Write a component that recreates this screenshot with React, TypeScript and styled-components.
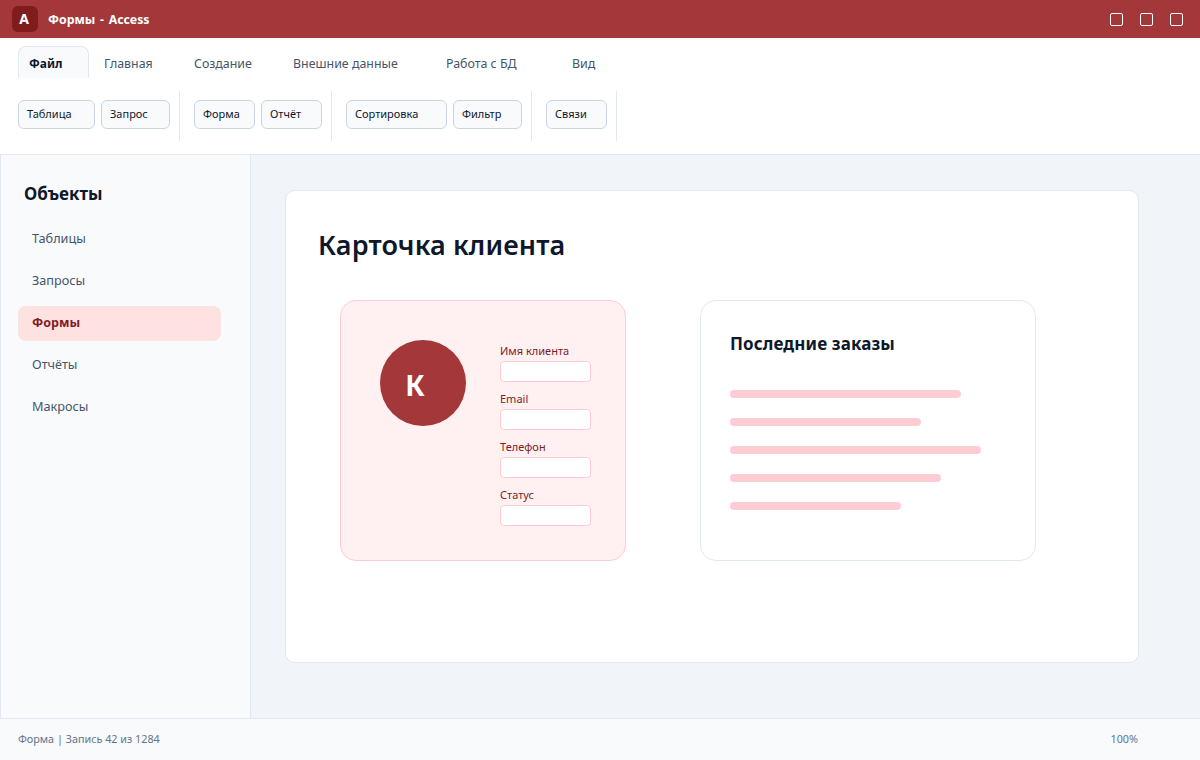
import React from "react";
import styled, { createGlobalStyle } from "styled-components";

const GlobalStyle = createGlobalStyle`
  html, body {
    margin: 0;
    padding: 0;
    height: 100%;
    overflow: hidden;
  }
  body {
    font-family: "Noto Sans", "Open Sans", sans-serif;
    color: #0f172a;
  }
  * {
    box-sizing: border-box;
  }
`;

const Page = styled.div`
  width: 1200px;
  height: 760px;
  display: flex;
  flex-direction: column;
  background: #f1f5f9;
`;

const TitleBar = styled.div`
  height: 38px;
  flex: none;
  display: flex;
  align-items: center;
  padding: 0 17px 0 12px;
  background: #a4373a;
  color: white;
`;
const Logo = styled.div`
  width: 26px;
  height: 26px;
  margin-right: 10px;
  display: flex;
  align-items: center;
  justify-content: center;
  background: #7f1d1d;
  border-radius: 6px;
  font-size: 14px;
  font-weight: 700;
  line-height: 22px;
  padding: 0 2px 0 0;
`;
const WindowTitle = styled.div`
  flex: 1;
  font-size: 12.3px;
  font-weight: 700;
  word-spacing: 1.5px;
`;
const WindowControls = styled.div`
  display: flex;
  gap: 17px;
`;
const WindowControl = styled.div`
  width: 13px;
  height: 13px;
  border: 1.5px solid white;
  border-radius: 2px;
`;

const Ribbon = styled.div`
  height: 117px;
  flex: none;
  background: white;
  border-bottom: 1px solid #e2e8f0;
  padding: 8px 18px 0;
`;
const Tabs = styled.div`
  display: flex;
  gap: 4px;
  height: 32px;
`;
const Tab = styled.div<{ $width: number; $active?: boolean }>`
  width: ${(p) => p.$width}px;
  height: 32px;
  padding-left: ${(p) => (p.$active ? 10 : 11)}px;
  font-size: ${(p) => (p.$active ? 12 : 12.4)}px;
  line-height: ${(p) => (p.$active ? 34 : 36)}px;
  color: ${(p) => (p.$active ? "#0f172a" : "#475569")};
  font-weight: ${(p) => (p.$active ? 700 : 400)};
  background: ${(p) => (p.$active ? "#f8fafc" : "transparent")};
  border: ${(p) => (p.$active ? "1px solid #e2e8f0" : "none")};
  border-bottom: none;
  border-radius: 8px 8px 0 0;
`;
const Tools = styled.div`
  display: flex;
  margin-top: 13px;
`;
const ToolGroup = styled.div`
  height: 50px;
  display: flex;
  align-items: flex-start;
  gap: 6px;
  padding: 9px 9px 0 0;
  margin-right: 14px;
  border-right: 1px solid #e2e8f0;
`;
const ToolButton = styled.div<{ $width: number }>`
  width: ${(p) => p.$width}px;
  height: 29px;
  padding-left: 8px;
  background: #f8fafc;
  border: 1px solid #cbd5e1;
  border-radius: 6px;
  font-size: 11px;
  line-height: 26px;
  color: #0f172a;
`;

const Body = styled.div`
  flex: 1;
  display: flex;
  min-height: 0;
`;
const Sidebar = styled.div`
  width: 251px;
  flex: none;
  background: #f8fafc;
  border-left: 1px solid #e2e8f0;
  border-right: 1px solid #e2e8f0;
  padding: 27px 29px 0 17px;
`;
const SidebarTitle = styled.div`
  margin: 0 0 16px 6px;
  font-size: 17px;
  line-height: 24px;
  font-weight: 700;
  color: #0f172a;
`;
const SidebarList = styled.div`
  display: flex;
  flex-direction: column;
  gap: 7px;
`;
const SidebarItem = styled.div<{ $active?: boolean }>`
  height: 35px;
  padding-left: 14px;
  border-radius: 8px;
  font-size: ${(p) => (p.$active ? 12.5 : 12.7)}px;
  line-height: 33px;
  color: ${(p) => (p.$active ? "#7f1d1d" : "#475569")};
  font-weight: ${(p) => (p.$active ? 700 : 400)};
  background: ${(p) => (p.$active ? "#fee2e2" : "transparent")};
`;

const Content = styled.div`
  flex: 1;
  padding: 35px 61px 55px 34px;
`;
const Card = styled.div`
  height: 473px;
  background: white;
  border: 1px solid #e2e8f0;
  border-radius: 10px;
  padding: 32px;
`;
const Heading = styled.h1`
  margin: 0 0 33px;
  font-size: 27px;
  line-height: 44px;
  font-weight: 600;
  letter-spacing: 0.12px;
  color: #0f172a;
`;
const Panels = styled.div`
  display: flex;
  gap: 74px;
  padding-left: 22px;
`;
const ClientPanel = styled.div`
  width: 286px;
  height: 261px;
  display: flex;
  align-items: flex-start;
  gap: 34px;
  padding: 39px 0 0 39px;
  background: #fff0f1;
  border: 1px solid #fecdd3;
  border-radius: 16px;
`;
const Avatar = styled.div`
  width: 86px;
  height: 86px;
  flex: none;
  display: flex;
  align-items: center;
  justify-content: center;
  border-radius: 50%;
  background: #a4373a;
  color: white;
  font-size: 28px;
  font-weight: 700;
  padding: 4px 16px 0 0;
`;
const Fields = styled.div`
  display: flex;
  flex-direction: column;
  gap: 6px;
  width: 91px;
`;
const Field = styled.div`
  display: flex;
  flex-direction: column;
  height: 42px;
`;
const FieldLabel = styled.div`
  height: 21px;
  font-size: 11px;
  line-height: 21px;
  color: #7f1d1d;
`;
const FieldInput = styled.div`
  height: 21px;
  background: white;
  border: 1px solid #fecdd3;
  border-radius: 4px;
`;
const OrdersPanel = styled.div`
  width: 336px;
  height: 261px;
  background: white;
  border: 1px solid #e2e8f0;
  border-radius: 16px;
  padding: 29px;
`;
const OrdersTitle = styled.div`
  font-size: 17px;
  line-height: 28px;
  font-weight: 700;
  letter-spacing: 0.12px;
  color: #0f172a;
  margin-bottom: 32px;
`;
const Bars = styled.div`
  display: flex;
  flex-direction: column;
  gap: 20px;
`;
const Bar = styled.div<{ $width: number }>`
  width: ${(p) => p.$width}px;
  height: 8px;
  border-radius: 4px;
  background: #fecdd3;
`;

const StatusBar = styled.div`
  height: 42px;
  flex: none;
  display: flex;
  align-items: center;
  justify-content: space-between;
  padding: 0 62px 2px 18px;
  background: #f8fafc;
  border-top: 1px solid #e2e8f0;
  font-size: 10.8px;
  color: #64748b;
`;

const tabs = [
  { label: "Файл", width: 71, active: true },
  { label: "Главная", width: 86 },
  { label: "Создание", width: 95 },
  { label: "Внешние данные", width: 149 },
  { label: "Работа с БД", width: 122 },
  { label: "Вид", width: 60 },
];

const toolGroups = [
  [
    { label: "Таблица", width: 77 },
    { label: "Запрос", width: 69 },
  ],
  [
    { label: "Форма", width: 61 },
    { label: "Отчёт", width: 61 },
  ],
  [
    { label: "Сортировка", width: 101 },
    { label: "Фильтр", width: 69 },
  ],
  [{ label: "Связи", width: 61 }],
];

const objects = ["Таблицы", "Запросы", "Формы", "Отчёты", "Макросы"];
const fields = ["Имя клиента", "Email", "Телефон", "Статус"];
const orderBars = [231, 191, 251, 211, 171];

export default function App() {
  return (
    <Page>
      <GlobalStyle />
      <TitleBar>
        <Logo>A</Logo>
        <WindowTitle>Формы - Access</WindowTitle>
        <WindowControls>
          <WindowControl />
          <WindowControl />
          <WindowControl />
        </WindowControls>
      </TitleBar>
      <Ribbon>
        <Tabs>
          {tabs.map((tab) => (
            <Tab key={tab.label} $width={tab.width} $active={tab.active}>
              {tab.label}
            </Tab>
          ))}
        </Tabs>
        <Tools>
          {toolGroups.map((group) => (
            <ToolGroup key={group[0].label}>
              {group.map((tool) => (
                <ToolButton key={tool.label} $width={tool.width}>
                  {tool.label}
                </ToolButton>
              ))}
            </ToolGroup>
          ))}
        </Tools>
      </Ribbon>
      <Body>
        <Sidebar>
          <SidebarTitle>Объекты</SidebarTitle>
          <SidebarList>
            {objects.map((name) => (
              <SidebarItem key={name} $active={name === "Формы"}>
                {name}
              </SidebarItem>
            ))}
          </SidebarList>
        </Sidebar>
        <Content>
          <Card>
            <Heading>Карточка клиента</Heading>
            <Panels>
              <ClientPanel>
                <Avatar>К</Avatar>
                <Fields>
                  {fields.map((name) => (
                    <Field key={name}>
                      <FieldLabel>{name}</FieldLabel>
                      <FieldInput />
                    </Field>
                  ))}
                </Fields>
              </ClientPanel>
              <OrdersPanel>
                <OrdersTitle>Последние заказы</OrdersTitle>
                <Bars>
                  {orderBars.map((width) => (
                    <Bar key={width} $width={width} />
                  ))}
                </Bars>
              </OrdersPanel>
            </Panels>
          </Card>
        </Content>
      </Body>
      <StatusBar>
        <span>Форма | Запись 42 из 1284</span>
        <span>100%</span>
      </StatusBar>
    </Page>
  );
}
